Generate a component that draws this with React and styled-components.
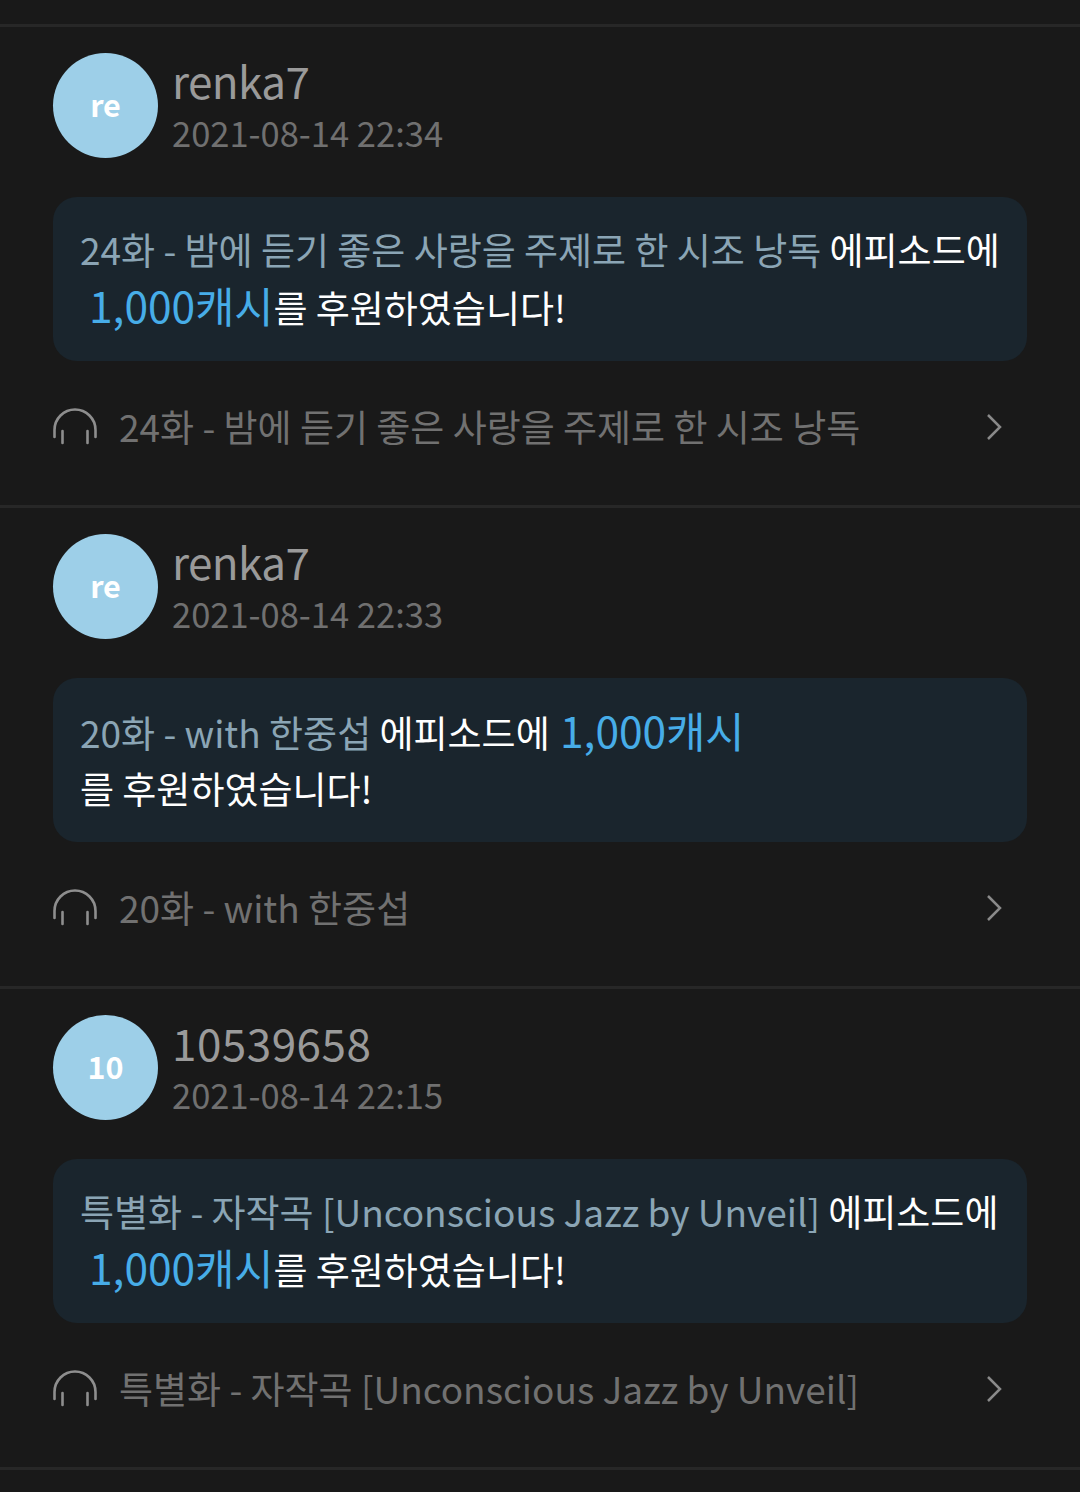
import styled, { createGlobalStyle } from "styled-components";

const Global = createGlobalStyle`
    html, body {
        margin: 0;
        background: #191919;
    }
    body {
        font-family: "Noto Sans CJK KR", sans-serif;
    }
`
const Page = styled.div`
    width: 1080px;
    height: 1492px;
    overflow: hidden;
    padding-top: 24px;
    box-sizing: border-box;
`
const Item = styled.section`
    height: 481px;
    box-sizing: border-box;
    border-top: 3px solid #272727;
    padding: 26px 53px 0;
`
const Header = styled.div`
    display: flex;
    align-items: center;
    gap: 14px;
`
const Avatar = styled.div`
    width: 105px;
    height: 105px;
    padding-bottom: 4px;
    box-sizing: border-box;
    border-radius: 50%;
    background: #9dcfe8;
    color: #fff;
    font-size: 30.5px;
    font-weight: 700;
    display: flex;
    align-items: center;
    justify-content: center;
`
const Meta = styled.div`
    display: flex;
    flex-direction: column;
    gap: 9px;
    margin-bottom: 2px;
`
const Name = styled.div`
    color: #9a9a9a;
    font-size: 44px;
    line-height: 46px;
    letter-spacing: ${p => p.$spacing}px;
`
const Time = styled.div`
    color: #707070;
    font-size: 34.5px;
    line-height: 40px;
`
const Message = styled.div`
    margin-top: 39px;
    height: 164px;
    box-sizing: border-box;
    padding: 24px 27px;
    border-radius: 24px;
    background: #1a252d;
    color: #fff;
    font-size: 37px;
    line-height: 56px;
`
const Title = styled.span`
    color: #8ba5b5;
`
const Amount = styled.span`
    color: #47ade8;
    font-size: 42.5px;
    margin-left: ${p => (p.$indent ? "9px" : "2px")};
`
const Episode = styled.div`
    margin-top: 37px;
    display: flex;
    align-items: center;
    gap: 22px;
    padding-right: 25px;
    color: #717171;
    font-size: 37px;
    line-height: 56px;
`
const EpisodeTitle = styled.span`
    flex: 1;
    margin-bottom: 2px;
`

const HeadphonesIcon = () => (
    <svg width="44" height="38" viewBox="0 0 44 38" fill="none" stroke="#8e8e8e" strokeWidth="2.6" strokeLinecap="round">
        <path d="M1.500 29v-7a20.500 20.500 0 0 1 41 0v7" />
        <path d="M9.500 23v12M34.500 23v12" />
    </svg>
)

const ChevronIcon = () => (
    <svg width="16" height="28" viewBox="0 0 16 28" fill="none" stroke="#8a8a8a" strokeWidth="2.5">
        <path d="M2 2l12 12L2 26" />
    </svg>
)

const items = [
    {
        name: "renka7",
        spacing: -0.6,
        initials: "re",
        time: "2021-08-14 22:34",
        title: "24화 - 밤에 듣기 좋은 사랑을 주제로 한 시조 낭독",
        wrap: true,
    },
    {
        name: "renka7",
        spacing: -0.6,
        initials: "re",
        time: "2021-08-14 22:33",
        title: "20화 - with 한중섭",
        wrap: false,
    },
    {
        name: "10539658",
        spacing: 0.5,
        initials: "10",
        time: "2021-08-14 22:15",
        title: "특별화 - 자작곡 [Unconscious Jazz by Unveil]",
        wrap: true,
    },
]

export default function App() {
    return (
        <Page>
            <Global />
            {items.map((item, i) => (
                <Item key={i}>
                    <Header>
                        <Avatar>{item.initials}</Avatar>
                        <Meta>
                            <Name $spacing={item.spacing}>{item.name}</Name>
                            <Time>{item.time}</Time>
                        </Meta>
                    </Header>
                    <Message>
                        <Title>{item.title}</Title> 에피소드에{" "}
                        {item.wrap && <br />}
                        <Amount $indent={item.wrap}>1,000캐시</Amount>
                        {!item.wrap && <br />}를 후원하였습니다!
                    </Message>
                    <Episode>
                        <HeadphonesIcon />
                        <EpisodeTitle>{item.title}</EpisodeTitle>
                        <ChevronIcon />
                    </Episode>
                </Item>
            ))}
            <Item />
        </Page>
    )
}
